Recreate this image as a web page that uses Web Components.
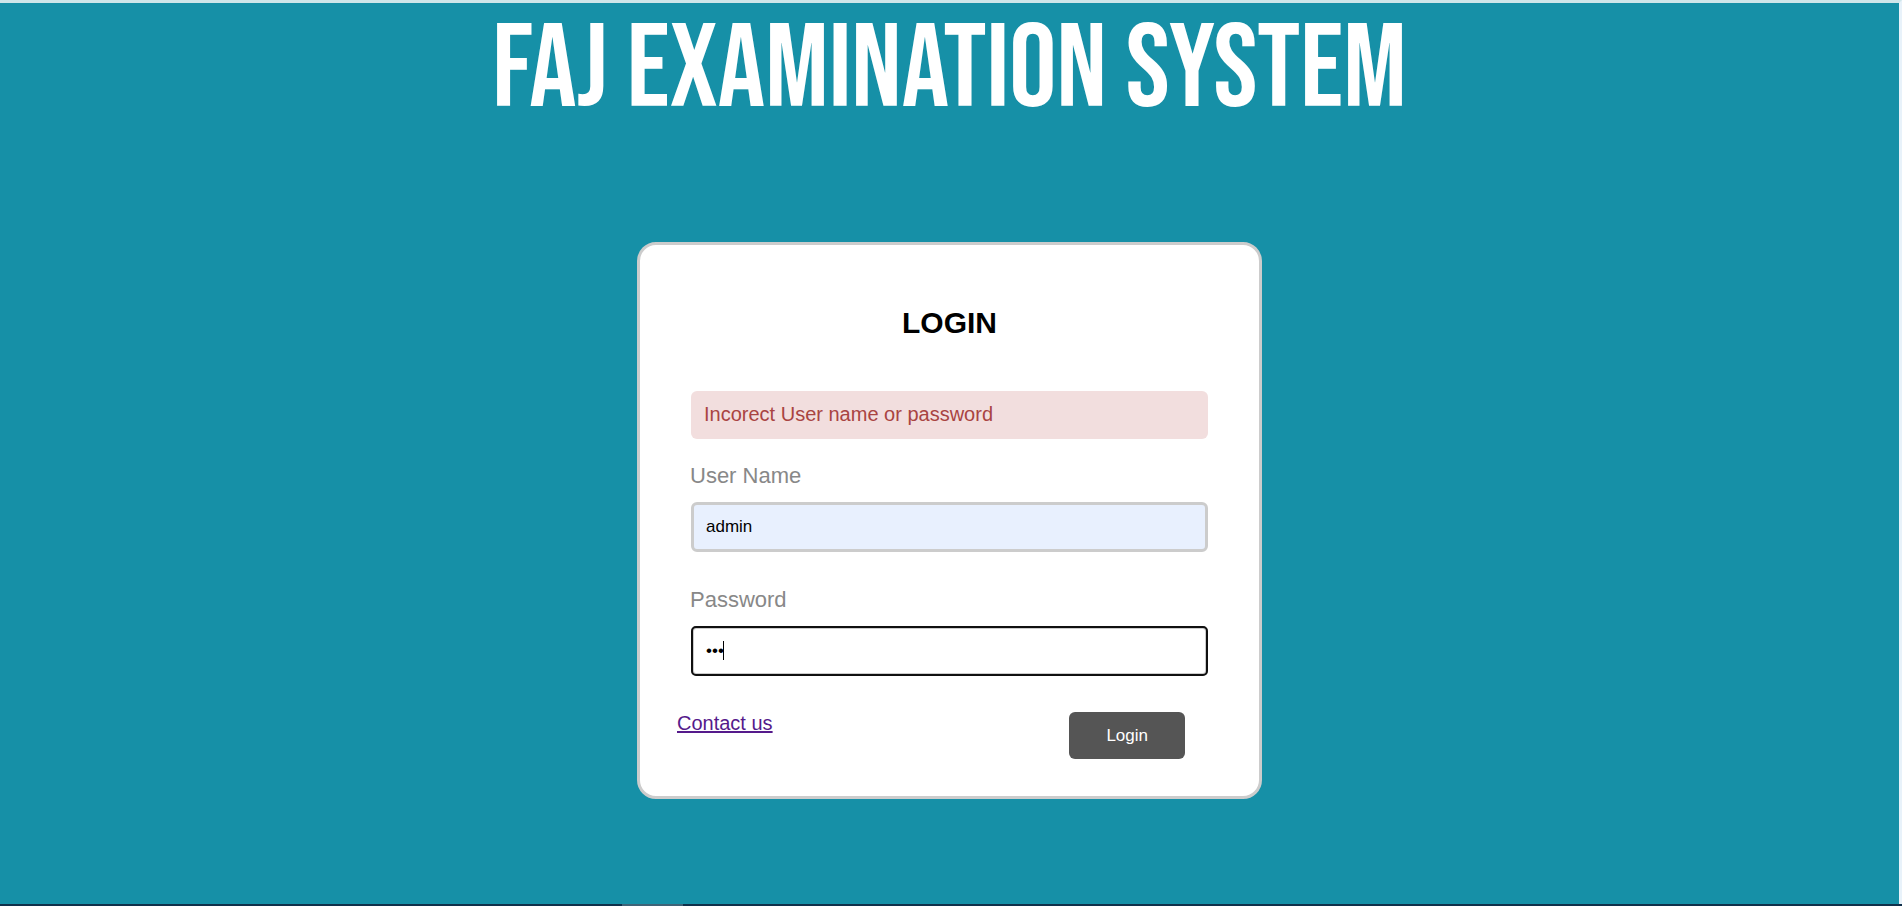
<!DOCTYPE html>
<html lang="en">
<head>
<meta charset="utf-8">
<meta name="viewport" content="width=device-width, initial-scale=1">
<title>FAJ Examination System</title>
<style>
html, body { margin: 0; height: 100%; }
body { font-family: "Liberation Sans", Arial, sans-serif; font-size: 20px; line-height: 22px; color: #000; }
</style>
</head>
<body>
<exam-page>
  <exam-banner>FAJ EXAMINATION SYSTEM</exam-banner>
  <login-card>
    <form-alert slot="alert">Incorect User name or password</form-alert>
    <form-field label="User Name" type="text" name="uname" value="admin" autofilled></form-field>
    <form-field label="Password" type="password" name="password" value="123" focused></form-field>
    <text-link slot="actions" href="#contact">Contact us</text-link>
    <submit-button slot="actions">Login</submit-button>
  </login-card>
</exam-page>
<script>
const define = (name, markup, setup) => {
  const template = document.createElement('template');
  template.innerHTML = markup;
  customElements.define(name, class extends HTMLElement {
    constructor() {
      super();
      this.attachShadow({ mode: 'open' }).append(template.content.cloneNode(true));
    }
    connectedCallback() { if (setup) setup(this, this.shadowRoot); }
  });
};

define('exam-page', `
<style>
:host { display: flex; flex-direction: column; box-sizing: border-box; min-height: 100%; background: #1690a7; border-top: 3px solid #cfe6ea; border-right: 3px solid #e8f2fa; }
main { flex: 1; display: flex; flex-direction: column; align-items: center; }
footer { display: flex; justify-content: center; height: 2px; margin-right: -3px; background: #10304a; }
.tab { width: 61px; margin-right: 597px; background: #3e6377; }
</style>
<main><slot></slot></main>
<footer><span class="tab"></span></footer>`);

define('exam-banner', `
<style>
:host { display: block; margin-bottom: 103px; }
h1 { margin: 0; font: 400 118px/136px "Bebas Neue", Oswald, "Open Sans Condensed", sans-serif; color: #fff; text-align: center; }
</style>
<h1><slot></slot></h1>`);

define('login-card', `
<style>
:host { display: block; box-sizing: border-box; width: 100%; max-width: 625px; padding: 61px 37px 37px; background: #fff; border: 3px solid #ccc; border-radius: 19px; }
h2 { margin: 0 0 51px; font-size: 30px; line-height: 34px; text-align: center; }
.fields { display: flex; flex-direction: column; gap: 35px; margin: 24px 14px 36px; }
.actions { display: flex; justify-content: space-between; align-items: flex-start; }
</style>
<form>
  <h2>LOGIN</h2>
  <slot name="alert"></slot>
  <div class="fields"><slot></slot></div>
  <div class="actions"><slot name="actions"></slot></div>
</form>`);

define('form-alert', `
<style>
:host { display: block; margin: 0 14px; padding: 12px 13px 14px; background: #f2dede; color: #a94442; border-radius: 6px; }
</style>
<div role="alert"><slot></slot></div>`);

define('form-field', `
<style>
:host { display: flex; flex-direction: column; gap: 13px; }
label { margin-left: -1px; font-size: 22px; line-height: 26px; color: #888; }
.box { position: relative; }
input { display: block; box-sizing: border-box; width: 100%; height: 50px; margin: 0; padding: 0 12px; border: 3px solid #ccc; border-radius: 6px; font: 17px "Liberation Sans", Arial, sans-serif; color: #000; background: #fff; caret-color: transparent; }
.caret { display: none; position: absolute; left: 32px; top: 15px; width: 1px; height: 19px; background: #000; }
:host([autofilled]) input { background: #e8f0fe; }
:host([focused]) input { outline: 2px solid #101010; outline-offset: -2px; border-radius: 5px; }
:host([focused]) .caret { display: block; }
</style>
<label for="control"></label>
<div class="box"><input id="control"><span class="caret"></span></div>`, (host, root) => {
  const input = root.querySelector('input');
  root.querySelector('label').textContent = host.getAttribute('label');
  input.type = host.getAttribute('type');
  input.name = host.getAttribute('name');
  input.value = host.getAttribute('value');
  if (host.hasAttribute('focused')) {
    input.focus();
    input.setSelectionRange(input.value.length, input.value.length);
  }
});

define('text-link', `
<style>
:host { display: block; }
a { color: #551a8b; text-decoration: underline; }
</style>
<a><slot></slot></a>`, (host, root) => { root.querySelector('a').href = host.getAttribute('href'); });

define('submit-button', `
<style>
:host { display: block; margin-right: 37px; }
button { display: block; height: 47px; margin: 0; padding: 0 37px; border: 0; border-radius: 6px; background: #555; color: #fff; font: 17px "Liberation Sans", Arial, sans-serif; }
</style>
<button type="submit"><slot></slot></button>`);
</script>
</body>
</html>
